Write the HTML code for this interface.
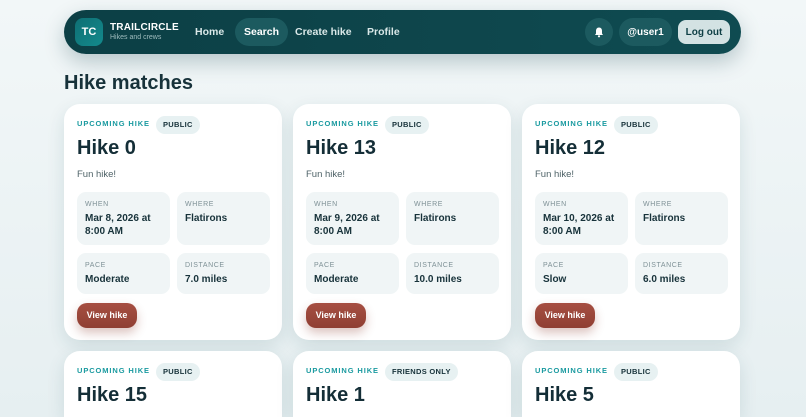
<!DOCTYPE html>
<html style="width:806px;height:417px;overflow:hidden"><head><style>
*{box-sizing:border-box;margin:0;padding:0}
body{width:806px;height:417px;overflow:hidden;background:linear-gradient(180deg,#f2f7f8,#e6eff1);font-family:"Liberation Sans",sans-serif;color:#17323a;position:relative}
.nav{position:absolute;left:64px;top:10px;width:677px;height:44px;border-radius:22px;background:linear-gradient(90deg,#0c3f45,#0f4b51);box-shadow:0 8px 20px rgba(10,60,70,.25)}
.logo{position:absolute;left:11px;top:8px;width:28px;height:28px;border-radius:8px;background:linear-gradient(135deg,#0f6f74,#138a8c);color:#fff;font-weight:bold;font-size:11px;display:flex;align-items:center;justify-content:center}
.brand{position:absolute;left:46px;top:12px;color:#fff;font-weight:bold;font-size:10px;letter-spacing:.2px}
.brand small{display:block;font-weight:normal;font-size:7px;color:#9fbcbe;letter-spacing:0;margin-top:1px}
.link{position:absolute;top:8px;height:28px;line-height:29px;color:#d9e8e8;font-weight:bold;font-size:10.5px;padding:0 9px;border-radius:14px}
.pill{position:absolute;top:8px;height:28px;border-radius:14px;background:#1c5a5f;color:#fff;font-weight:bold;font-size:10px;line-height:29px;text-align:center}
h1{position:absolute;left:64px;top:72px;font-size:20px;color:#17323a}
.card{position:absolute;width:218px;height:236px;background:#fff;border-radius:16px;box-shadow:0 6px 18px rgba(20,70,80,.12)}
.card.s{height:66px;border-radius:16px 16px 0 0}
.up{position:absolute;left:13px;top:15px;font-size:7.5px;font-weight:bold;letter-spacing:.9px;color:#1a9aa0}
.tag{position:absolute;left:92px;top:12px;height:18px;line-height:18px;padding:0 7px;border-radius:9px;background:#e7f1f2;font-size:7.5px;font-weight:bold;color:#17323a;letter-spacing:.3px}
.t{position:absolute;left:13px;top:33px;font-size:20px;font-weight:bold;color:#142e37}
.d{position:absolute;left:13px;top:65px;font-size:9.5px;color:#4f6368}
.box{position:absolute;width:93px;background:#f0f5f6;border-radius:9px;padding:9px 8px}
.box i{display:block;font-style:normal;font-size:7px;letter-spacing:.6px;color:#7e9196}
.box b{display:block;font-size:10px;margin-top:4px;line-height:13px}
.btn{position:absolute;left:13px;top:199px;width:60px;height:25px;border-radius:10px;background:linear-gradient(180deg,#a64f42,#8f3f33);color:#fff;font-size:9px;font-weight:bold;text-align:center;line-height:25px;box-shadow:0 5px 10px rgba(140,60,45,.3)}
</style></head><body>
<div class="nav">
<div class="logo">TC</div>
<div class="brand">TRAILCIRCLE<small>Hikes and crews</small></div>
<div class="link" style="left:122px">Home</div>
<div class="link" style="left:171px;background:#1c5a5f;color:#fff">Search</div>
<div class="link" style="left:222px">Create hike</div>
<div class="link" style="left:294px">Profile</div>
<div class="pill" style="left:521px;width:28px"><svg width="12" height="12" viewBox="0 0 12 12" style="margin-top:8px"><path d="M6 1.5c-2 0-3 1.5-3 3.5v2.5L2 9h8L9 7.5V5c0-2-1-3.5-3-3.5z" fill="#fff"/><circle cx="6" cy="10.3" r="1.1" fill="#fff"/></svg></div>
<div class="pill" style="left:555px;width:53px">@user1</div>
<div class="pill" style="left:614px;width:52px;top:10px;height:24px;line-height:25px;border-radius:8px;background:#d3e2e3;color:#0e3f45">Log out</div>
</div>
<h1>Hike matches</h1>

<div class="card" style="left:64px;top:104px"><div class="up">UPCOMING HIKE</div><div class="tag">PUBLIC</div><div class="t">Hike 0</div><div class="d">Fun hike!</div>
<div class="box" style="left:13px;top:88px;height:53px"><i>WHEN</i><b>Mar 8, 2026 at 8:00 AM</b></div><div class="box" style="left:113px;top:88px;height:53px"><i>WHERE</i><b>Flatirons</b></div>
<div class="box" style="left:13px;top:149px;height:41px"><i>PACE</i><b>Moderate</b></div><div class="box" style="left:113px;top:149px;height:41px"><i>DISTANCE</i><b>7.0 miles</b></div><div class="btn">View hike</div></div>

<div class="card" style="left:293px;top:104px"><div class="up">UPCOMING HIKE</div><div class="tag">PUBLIC</div><div class="t">Hike 13</div><div class="d">Fun hike!</div>
<div class="box" style="left:13px;top:88px;height:53px"><i>WHEN</i><b>Mar 9, 2026 at 8:00 AM</b></div><div class="box" style="left:113px;top:88px;height:53px"><i>WHERE</i><b>Flatirons</b></div>
<div class="box" style="left:13px;top:149px;height:41px"><i>PACE</i><b>Moderate</b></div><div class="box" style="left:113px;top:149px;height:41px"><i>DISTANCE</i><b>10.0 miles</b></div><div class="btn">View hike</div></div>

<div class="card" style="left:522px;top:104px"><div class="up">UPCOMING HIKE</div><div class="tag">PUBLIC</div><div class="t">Hike 12</div><div class="d">Fun hike!</div>
<div class="box" style="left:13px;top:88px;height:53px"><i>WHEN</i><b>Mar 10, 2026 at 8:00 AM</b></div><div class="box" style="left:113px;top:88px;height:53px"><i>WHERE</i><b>Flatirons</b></div>
<div class="box" style="left:13px;top:149px;height:41px"><i>PACE</i><b>Slow</b></div><div class="box" style="left:113px;top:149px;height:41px"><i>DISTANCE</i><b>6.0 miles</b></div><div class="btn">View hike</div></div>

<div class="card s" style="left:64px;top:351px"><div class="up">UPCOMING HIKE</div><div class="tag">PUBLIC</div><div class="t">Hike 15</div></div>
<div class="card s" style="left:293px;top:351px"><div class="up">UPCOMING HIKE</div><div class="tag">FRIENDS ONLY</div><div class="t">Hike 1</div></div>
<div class="card s" style="left:522px;top:351px"><div class="up">UPCOMING HIKE</div><div class="tag">PUBLIC</div><div class="t">Hike 5</div></div>
</body></html>
